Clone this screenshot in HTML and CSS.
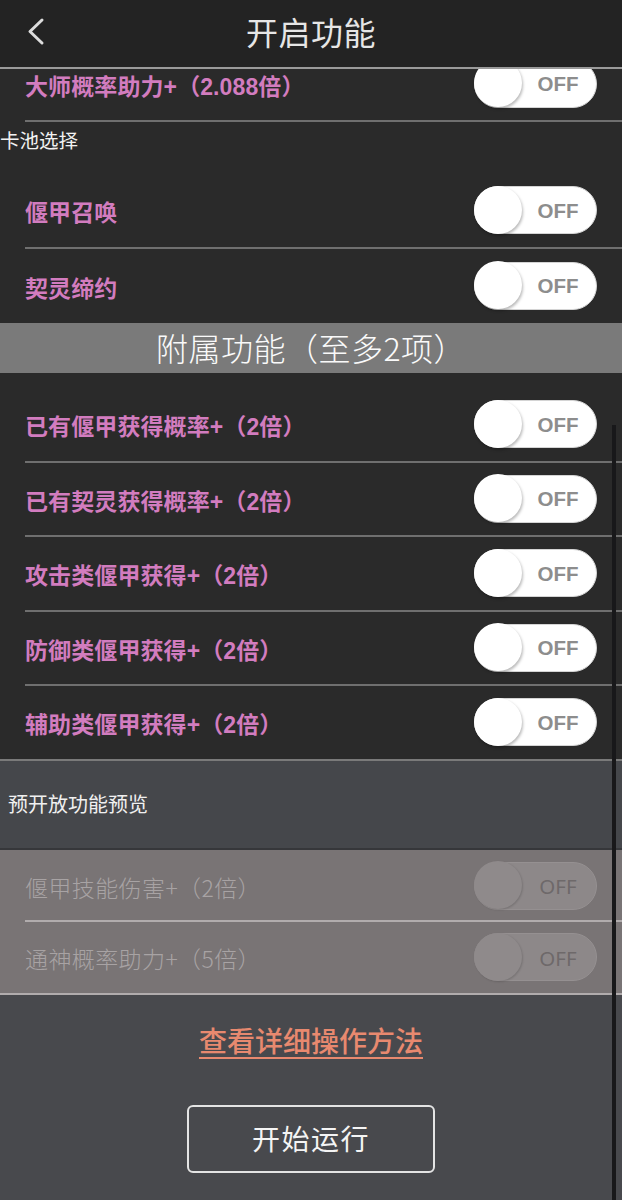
FILE: index.html
```html
<!DOCTYPE html>
<html lang="zh-CN">
<head>
<meta charset="utf-8">
<title>开启功能</title>
<link rel="stylesheet" href="styles.css">
</head>
<body>
<div class="screen">
  <header class="topbar">
    <span class="back">
      <svg width="24" height="30" viewBox="0 0 24 30"><path d="M17 4 L5 15.5 L17 27" fill="none" stroke="#dcdcdc" stroke-width="3" stroke-linecap="round" stroke-linejoin="round"/></svg>
    </span>
    <h1 class="title">开启功能</h1>
  </header>

  <main class="list">
    <div class="row row-cut">
      <span class="label">大师概率助力+（2.088倍）</span>
      <span class="toggle"><span class="knob"></span><span class="off">OFF</span></span>
    </div>

    <div class="section-label">卡池选择</div>
    <div class="row">
      <span class="label">偃甲召唤</span>
      <span class="toggle"><span class="knob"></span><span class="off">OFF</span></span>
    </div>
    <div class="row row-last">
      <span class="label">契灵缔约</span>
      <span class="toggle"><span class="knob"></span><span class="off">OFF</span></span>
    </div>

    <div class="band">附属功能（至多2项）</div>

    <div class="group">
      <div class="row">
        <span class="label">已有偃甲获得概率+（2倍）</span>
        <span class="toggle"><span class="knob"></span><span class="off">OFF</span></span>
      </div>
      <div class="row">
        <span class="label">已有契灵获得概率+（2倍）</span>
        <span class="toggle"><span class="knob"></span><span class="off">OFF</span></span>
      </div>
      <div class="row">
        <span class="label">攻击类偃甲获得+（2倍）</span>
        <span class="toggle"><span class="knob"></span><span class="off">OFF</span></span>
      </div>
      <div class="row">
        <span class="label">防御类偃甲获得+（2倍）</span>
        <span class="toggle"><span class="knob"></span><span class="off">OFF</span></span>
      </div>
      <div class="row row-full">
        <span class="label">辅助类偃甲获得+（2倍）</span>
        <span class="toggle"><span class="knob"></span><span class="off">OFF</span></span>
      </div>
    </div>

    <div class="preview-label">预开放功能预览</div>

    <div class="row disabled">
      <span class="label">偃甲技能伤害+（2倍）</span>
      <span class="toggle"><span class="knob"></span><span class="off">OFF</span></span>
    </div>
    <div class="row disabled row-full">
      <span class="label">通神概率助力+（5倍）</span>
      <span class="toggle"><span class="knob"></span><span class="off">OFF</span></span>
    </div>

    <div class="actions">
      <a class="help-link" href="#">查看详细操作方法</a>
      <button class="start-btn" type="button">开始运行</button>
    </div>
  </main>

  <div class="scrollbar"></div>
</div>
</body>
</html>
```

FILE: styles.css
```css
* { box-sizing: border-box; }

html, body {
  margin: 0;
  padding: 0;
  width: 622px;
  height: 1200px;
  overflow: hidden;
  background: #2a2a2a;
}

body {
  font-family: "Noto Sans CJK SC", "Liberation Sans", sans-serif;
  color: #eeeeee;
}

.screen {
  position: relative;
  width: 622px;
  height: 1200px;
  display: flex;
  flex-direction: column;
  background: #2a2a2a;
}

.topbar {
  flex: none;
  height: 69px;
  background: #232323;
  border-bottom: 2px solid #9a9a9a;
  display: flex;
  align-items: center;
  justify-content: center;
  position: relative;
  z-index: 2;
}

.back {
  position: absolute;
  left: 25px;
  top: 16px;
  width: 24px;
  height: 30px;
  display: block;
}

.back svg { display: block; }

.title {
  margin: 0;
  font-size: 32px;
  font-weight: 400;
  color: #e6e6e6;
  letter-spacing: 0.5px;
  line-height: 1;
  margin-top: -6px;
}

.list {
  flex: 1;
  overflow: hidden;
  display: flex;
  flex-direction: column;
  background: #2a2a2a;
}

.row {
  flex: none;
  height: 74.5px;
  margin-left: 25px;
  padding-right: 25px;
  border-bottom: 2px solid #6f6f6f;
  display: flex;
  align-items: center;
  justify-content: space-between;
}

.row-cut { margin-top: -21.5px; }

.row-last { border-bottom: none; }

.row-full {
  margin-left: 0;
  padding-left: 25px;
}

.label {
  font-family: "Liberation Sans", "Noto Sans CJK SC", sans-serif;
  font-size: 23px;
  font-weight: 700;
  color: #d27cbf;
  letter-spacing: 0.1px;
  margin-top: 2px;
}

.toggle {
  flex: none;
  width: 123px;
  height: 48px;
  border-radius: 24px;
  background: #ffffff;
  border: 1px solid #d4d4d4;
  display: flex;
  align-items: center;
  position: relative;
}

.knob {
  flex: none;
  width: 48px;
  height: 48px;
  margin: -1px 0 0 -1px;
  border-radius: 50%;
  background: #ffffff;
  box-shadow: 1px 2px 3px rgba(0, 0, 0, 0.28);
}

.off {
  flex: 1;
  text-align: center;
  font-family: "Liberation Sans", "Noto Sans", sans-serif;
  font-weight: 700;
  font-size: 20.5px;
  color: #8d8d8d;
  padding-right: 2px;
  margin-top: 1px;
}

.section-label {
  flex: none;
  height: 52px;
  padding-top: 4px;
  font-size: 19.5px;
  color: #f2f2f2;
  line-height: 28px;
}

.band {
  flex: none;
  height: 50px;
  background: #7a7a7a;
  color: #fafafa;
  font-size: 32px;
  font-weight: 300;
  text-align: center;
  line-height: 48px;
  letter-spacing: 0.5px;
}

.group {
  flex: none;
  padding-top: 15px;
  display: flex;
  flex-direction: column;
}

.group .row-full { border-bottom-color: #7a7a7a; }

.preview-label {
  flex: none;
  height: 89px;
  background: #45474b;
  border-bottom: 2px solid #36373a;
  padding-left: 8px;
  font-size: 20px;
  color: #f0f0f0;
  display: flex;
  align-items: center;
  padding-bottom: 2px;
}

.row.disabled {
  height: 72.5px;
  background: #797475;
  border-bottom-color: #b1acad;
}

.row.disabled:not(.row-full) {
  margin-left: 0;
  padding-left: 25px;
  border-bottom: none;
  background-image: linear-gradient(#b1acad, #b1acad);
  background-size: calc(100% - 25px) 2px;
  background-position: 25px 100%;
  background-repeat: no-repeat;
}

.row.disabled .label {
  font-family: "Noto Sans CJK SC", sans-serif;
  font-weight: 300;
  color: #a8a3a4;
  letter-spacing: 0.4px;
}

.row.disabled .toggle {
  background: #8d8889;
  border-color: #959091;
}

.row.disabled .knob {
  background: #8f8a8b;
  box-shadow: 1px 1px 2px rgba(0, 0, 0, 0.15);
}

.row.disabled .off {
  font-family: "Noto Sans", sans-serif;
  font-weight: 400;
  color: #6e696a;
}

.actions {
  flex: 1;
  background: #48494d;
  display: flex;
  flex-direction: column;
  align-items: center;
  padding-top: 26px;
}

.help-link {
  font-size: 28px;
  font-weight: 500;
  color: #e8896f;
  text-decoration: underline;
  text-decoration-thickness: 2px;
  text-underline-offset: 5px;
  line-height: 38px;
}

.start-btn {
  margin-top: 46px;
  width: 248px;
  height: 68px;
  border: 2px solid #e4e4e4;
  border-radius: 6px;
  background: transparent;
  color: #f4f4f4;
  font-family: "Noto Sans CJK SC", sans-serif;
  font-size: 28px;
  font-weight: 400;
  letter-spacing: 1.5px;
  padding: 0 0 2px;
}

.scrollbar {
  position: absolute;
  left: 612px;
  top: 425px;
  width: 4px;
  height: 775px;
  background: #18181a;
  z-index: 3;
}
```
